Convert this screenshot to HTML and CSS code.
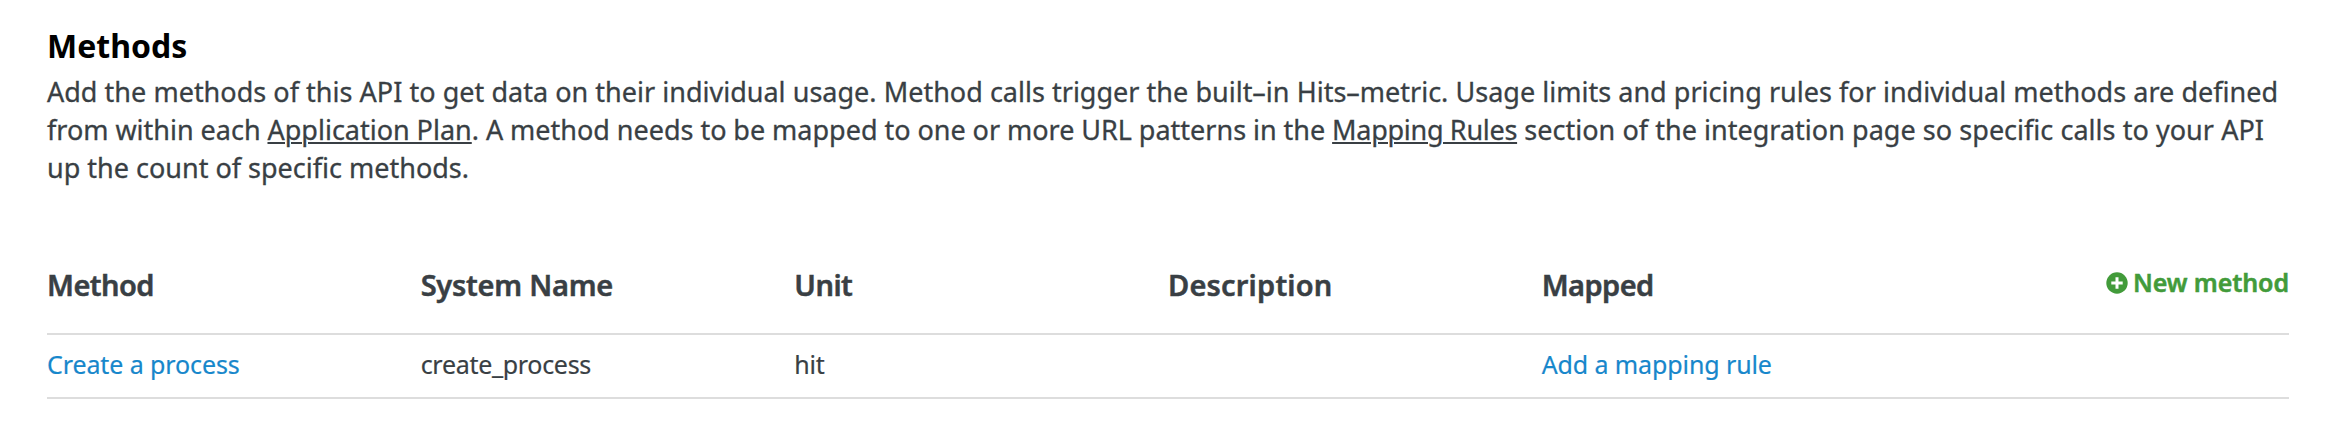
FILE: index.html
```
<!DOCTYPE html>
<html lang="en">
<head>
<meta charset="utf-8">
<title>Methods</title>
<link rel="stylesheet" href="styles.css">
</head>
<body>
<main class="page">
<h1 class="title">Methods</h1>
<p class="intro">
<span class="line l1">Add the methods of this API to get data on their individual usage. Method calls trigger the built–in Hits–metric. Usage limits and pricing rules for individual methods are defined</span>
<span class="line l2">from within each <a href="#">Application Plan</a>. A method needs to be mapped to one or more URL patterns in the <a class="rules" href="#">Mapping Rules</a><span class="tail"> section of the integration page so specific calls to your API</span></span>
<span class="line">up the count of specific methods.</span>
</p>
<div class="row head">
<span class="tight">Method</span><span class="name">System Name</span><span class="tight">Unit</span><span class="wide">Description</span><span class="tight">Mapped</span>
<a class="new" href="#"><svg class="plus" viewBox="0 0 22 22"><circle cx="11" cy="11" r="10.7" fill="#429b3a"/><path d="M11 5.3v11.4M5.3 11h11.4" stroke="#fff" stroke-width="3"/></svg><b>New method</b></a>
</div>
<div class="row data"><a href="#">Create a process</a><span class="sys">create_process</span><span class="sys">hit</span><span></span><a href="#">Add a mapping rule</a></div>
</main>
</body>
</html>
```
FILE: styles.css
```
body{margin:0;background:#fff;color:#393f44;font-family:"Noto Sans",sans-serif}
.page{padding:24px 39px 0 47px}
.title{margin:0;font-size:32px;line-height:44px;color:#000;font-weight:700}
.intro{margin:5px 0 0;font-size:27px;line-height:38px;-webkit-text-stroke:.3px}
.line{display:block;width:max-content;white-space:nowrap}
.l1{word-spacing:.12px}
.l2{word-spacing:-.12px}
.l2 .rules{letter-spacing:-.28px}
.l2 .tail{word-spacing:.2px}
.intro a{color:inherit;text-decoration:underline;text-decoration-thickness:2px;text-underline-offset:2px}
.row{display:grid;grid-template-columns:repeat(6,minmax(0,1fr));border-bottom:2px solid #ddd}
.row a{color:#1787cb;text-decoration:none}
.head{box-sizing:border-box;margin-top:69px;height:79px;padding-top:9px;font-size:29px;font-weight:600;line-height:40px;-webkit-text-stroke:.5px}
.tight{letter-spacing:-.55px}
.name{letter-spacing:-.25px}
.wide{letter-spacing:.2px}
.head .new{color:#429b3a;font-size:25px;line-height:34px;display:flex;justify-content:flex-end;align-items:flex-start;gap:5px}
.new b{font-weight:600;letter-spacing:-.1px}
.plus{width:22px;height:22px;margin-top:7px}
.data{height:62px;font-size:25px;line-height:58px;letter-spacing:-.1px;-webkit-text-stroke:.2px}
.data .sys{letter-spacing:-.3px}
```
